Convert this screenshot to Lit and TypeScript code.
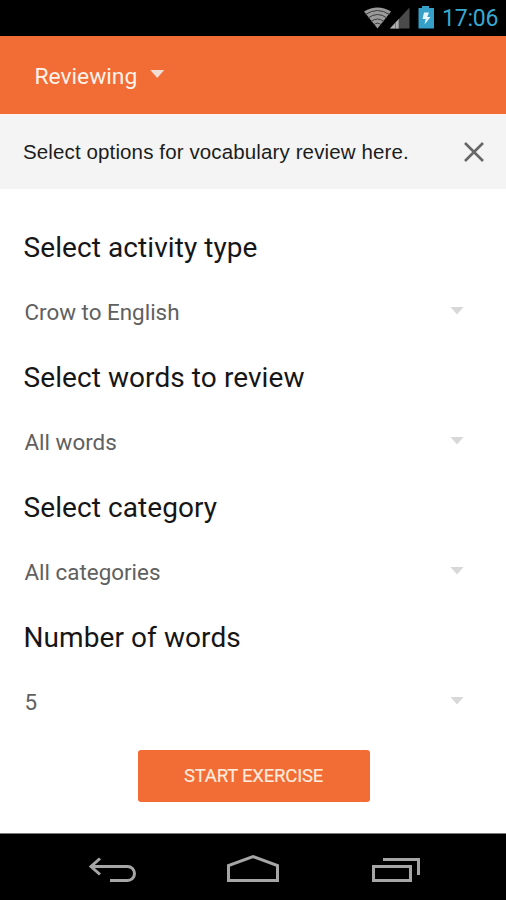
import { LitElement, html, css, svg } from "lit";
import { customElement, property } from "lit/decorators.js";

@customElement("status-bar")
class StatusBar extends LitElement {
  static styles = css`
    :host {
      display: flex;
      justify-content: flex-end;
      align-items: center;
      height: 36px;
      flex: none;
      padding-right: 7px;
      background: #000;
    }
    svg {
      display: block;
      width: 72px;
      height: 36px;
    }
    .clock {
      margin-left: 7px;
      width: 57px;
      padding-top: 2px;
      white-space: nowrap;
      font: 400 23px/36px Roboto, sans-serif;
      letter-spacing: -0.2px;
      color: #38a8d0;
    }
  `;

  render() {
    return html`
      <svg viewBox="0 0 72 36">
        <path d="M1 11.5 Q14.500 3.500 28 11.500 L14.500 28.500Z" fill="#9a9a9a" />
        <g fill="none" stroke="#3a3a3a" stroke-width="1">
          <path d="M2.500 14.500 Q14.500 6.500 26.500 14.500" />
          <path d="M5 18 Q14.500 11 24 18" />
          <path d="M8 21.500 Q14.500 16.500 21 21.500" />
          <path d="M10.500 25 Q14.500 21.500 18.500 25" />
        </g>
        <path d="M46.500 7.500V28.500H27Z" fill="#4a4a4a" />
        <path d="M36 18.800V28.500H27Z" fill="#b0b0b0" />
        <path d="M32.500 22V28.500M35.800 19V28.500" stroke="#555" stroke-width=".6" />
        <path d="M59 6h7v2h5v20.500H55.500V8H59z" fill="#36a0c8" />
        <path d="M61 12.500h5l-1.800 4.500h3.300l-6 7.500 1.200-5.500h-3.200z" fill="#e6f6fc" />
      </svg>
      <span class="clock">17:06</span>
    `;
  }
}

@customElement("option-field")
class OptionField extends LitElement {
  @property() label = "";
  @property() value = "";

  static styles = css`
    :host {
      display: block;
      font-family: Roboto, sans-serif;
    }
    .label {
      height: 65px;
      padding-left: 23.500px;
      font-size: 28px;
      line-height: 65px;
      color: #161616;
      letter-spacing: 0.08px;
      white-space: nowrap;
    }
    .select {
      display: flex;
      align-items: center;
      justify-content: space-between;
      height: 65px;
      padding: 0 42px 0 24.500px;
      font-size: 22.400px;
      line-height: 65px;
      color: #606060;
    }
    .arrow {
      width: 14px;
      height: 8px;
      margin-top: -4px;
      background: #d8d8d8;
      clip-path: polygon(0 0, 100% 0, 50% 100%);
    }
  `;

  render() {
    return html`
      <div class="label">${this.label}</div>
      <div class="select"><span>${this.value}</span><span class="arrow"></span></div>
    `;
  }
}

@customElement("nav-bar")
class NavBar extends LitElement {
  static styles = css`
    :host {
      display: flex;
      justify-content: space-between;
      align-items: center;
      height: 67px;
      flex: none;
      box-sizing: border-box;
      padding: 3px 85px 0 88px;
      border-top: 1px solid #777;
      background: #000;
    }
    svg {
      display: block;
      height: 32px;
      fill: none;
      stroke: #a6a6a6;
      stroke-width: 3;
    }
  `;

  private icon(width: number, shape: unknown) {
    return html`<svg width=${width} viewBox="0 0 ${width} 32">${shape}</svg>`;
  }

  render() {
    return html`
      ${this.icon(49, svg`<path d="M3 13.500H39.500A6.750 6.750 0 0 1 39.500 27.500H22M12 5.500L3 13.500L12 21.500" />`)}
      ${this.icon(54, svg`<path d="M1.500 27.500V12.500L26 3.500L50.500 12.500V27.500Z" />`)}
      ${this.icon(50, svg`<path d="M2.500 13.500H39.500V27.500H2.500ZM12 6.500H47.500V22" />`)}
    `;
  }
}

@customElement("app-root")
class AppRoot extends LitElement {
  private fields = [
    ["Select activity type", "Crow to English"],
    ["Select words to review", "All words"],
    ["Select category", "All categories"],
    ["Number of words", "5"],
  ];

  static styles = css`
    :host {
      display: flex;
      flex-direction: column;
      width: 506px;
      height: 900px;
      overflow: hidden;
      background: #fff;
      font-family: Roboto, sans-serif;
    }
    .toolbar {
      display: flex;
      align-items: center;
      flex: none;
      box-sizing: border-box;
      height: 78px;
      padding: 2px 0 0 34.500px;
      background: #f26c36;
      color: #fff3ea;
      font-size: 22.800px;
    }
    .caret {
      width: 14px;
      height: 8px;
      margin: -4px 0 0 13px;
      background: #f2ddd2;
      clip-path: polygon(0 0, 100% 0, 50% 100%);
    }
    .banner {
      display: flex;
      align-items: center;
      justify-content: space-between;
      flex: none;
      box-sizing: border-box;
      height: 75px;
      padding: 0 22px 1px 23px;
      border-top: 1px solid #fdf3ee;
      background: #f4f4f4;
      color: #1c1c1c;
      font: 20.500px "Liberation Sans", sans-serif;
      letter-spacing: 0.125px;
    }
    .close {
      display: block;
      width: 20px;
      height: 20px;
      stroke: #666;
      stroke-width: 2.600;
    }
    main {
      flex: 1;
      padding-top: 26px;
    }
    .start {
      display: block;
      width: 232px;
      height: 52px;
      margin: 14.500px 0 0 137.500px;
      padding: 1px 0 0;
      border: 0;
      border-radius: 3px;
      background: #f26c36;
      color: #ffeadc;
      font: 400 18.500px/51px Roboto, sans-serif;
      letter-spacing: -0.2px;
      -webkit-text-stroke: 0.2px #ffeadc;
    }
  `;

  render() {
    return html`
      <status-bar></status-bar>
      <header class="toolbar"><span>Reviewing</span><span class="caret"></span></header>
      <div class="banner">
        <span>Select options for vocabulary review here.</span>
        <svg class="close" viewBox="0 0 20 20"><path d="M1 1L19 19M19 1L1 19" /></svg>
      </div>
      <main>
        ${this.fields.map(([label, value]) => html`<option-field .label=${label} .value=${value}></option-field>`)}
        <button class="start">START EXERCISE</button>
      </main>
      <nav-bar></nav-bar>
    `;
  }
}
